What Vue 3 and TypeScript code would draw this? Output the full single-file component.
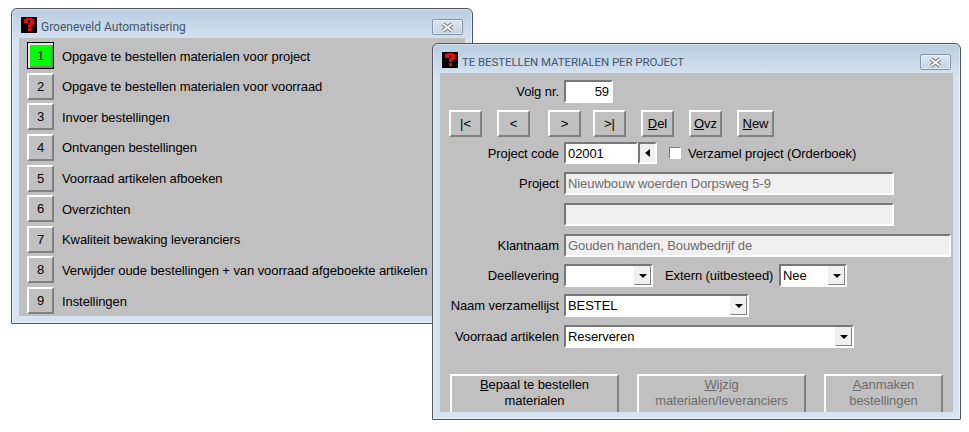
<script setup lang="ts">
const menuItems = [
  'Opgave te bestellen materialen voor project',
  'Opgave te bestellen materialen voor voorraad',
  'Invoer bestellingen',
  'Ontvangen bestellingen',
  'Voorraad artikelen afboeken',
  'Overzichten',
  'Kwaliteit bewaking leveranciers',
  'Verwijder oude bestellingen + van voorraad afgeboekte artikelen',
  'Instellingen',
];

const navButtons = [
  { key: '', post: '|<', width: 33 },
  { key: '', post: '<', width: 33 },
  { key: '', post: '>', width: 33 },
  { key: '', post: '>|', width: 33 },
  { key: 'D', post: 'el', width: 33 },
  { key: 'O', post: 'vz', width: 33 },
  { key: 'N', post: 'ew', width: 37 },
];
</script>

<template>
  <div class="desktop">
    <section class="window window-menu">
      <header class="titlebar">
        <svg class="app-icon" width="16" height="16" viewBox="0 0 16 16" shape-rendering="crispEdges">
          <rect width="16" height="16" fill="#000" />
          <path fill="#f00" d="M5 1h6v1h2v5h-1v1h-2v2H7V7h1V6h1V3H7v3H3V2h2zM7 11h3v3H7z" />
        </svg>
        <span class="title">Groeneveld Automatisering</span>
        <button class="close"><svg width="15" height="11" viewBox="0 0 15 11"><path d="M3 2l9 7M12 2l-9 7" stroke="#66727e" stroke-width="3.8" fill="none" /><path d="M3 2l9 7M12 2l-9 7" stroke="#fff" stroke-width="2" fill="none" /></svg></button>
      </header>
      <div class="client menu-client">
        <div v-for="(item, i) in menuItems" :key="item" class="menu-row">
          <button class="btn num" :class="{ active: i === 0 }">{{ i + 1 }}</button>
          <span class="menu-label">{{ item }}</span>
        </div>
      </div>
    </section>

    <section class="window window-form">
      <header class="titlebar">
        <svg class="app-icon" width="16" height="16" viewBox="0 0 16 16" shape-rendering="crispEdges">
          <rect width="16" height="16" fill="#000" />
          <path fill="#f00" d="M5 1h6v1h2v5h-1v1h-2v2H7V7h1V6h1V3H7v3H3V2h2zM7 11h3v3H7z" />
        </svg>
        <span class="title">TE BESTELLEN MATERIALEN PER PROJECT</span>
        <button class="close"><svg width="15" height="11" viewBox="0 0 15 11"><path d="M3 2l9 7M12 2l-9 7" stroke="#66727e" stroke-width="3.8" fill="none" /><path d="M3 2l9 7M12 2l-9 7" stroke="#fff" stroke-width="2" fill="none" /></svg></button>
      </header>
      <div class="client form-client">
        <div class="row volg">
          <label class="lbl">Volg nr.</label>
          <div class="field num-field">59</div>
        </div>

        <div class="nav">
          <button v-for="b in navButtons" :key="b.key + b.post" class="btn nav-btn" :style="{ width: b.width + 'px' }">
            <u v-if="b.key">{{ b.key }}</u>{{ b.post }}
          </button>
        </div>

        <div class="row code">
          <label class="lbl">Project code</label>
          <div class="field code-field">02001</div>
          <div class="lookup"><span class="arrow-left"></span></div>
          <span class="check"></span>
          <span class="check-label">Verzamel project (Orderboek)</span>
        </div>

        <div class="row project">
          <label class="lbl">Project</label>
          <div class="field off w-project">Nieuwbouw woerden Dorpsweg 5-9</div>
        </div>
        <div class="row project2">
          <div class="field off w-project offset"></div>
        </div>
        <div class="row klant">
          <label class="lbl">Klantnaam</label>
          <div class="field off w-klant">Gouden handen, Bouwbedrijf de</div>
        </div>

        <div class="row deel">
          <label class="lbl">Deellevering</label>
          <div class="field combo w-deel"><span></span><i class="drop"></i></div>
          <label class="extern">Extern (uitbesteed)</label>
          <div class="field combo w-nee"><span>Nee</span><i class="drop"></i></div>
        </div>
        <div class="row naam">
          <label class="lbl">Naam verzamellijst</label>
          <div class="field combo w-naam"><span>BESTEL</span><i class="drop"></i></div>
        </div>
        <div class="row voorraad">
          <label class="lbl">Voorraad artikelen</label>
          <div class="field combo w-voorraad"><span>Reserveren</span><i class="drop"></i></div>
        </div>

        <div class="actions">
          <button class="btn action a1"><u>B</u>epaal te bestellen<br>materialen</button>
          <button class="btn action a2 disabled"><u>W</u>ijzig<br>materialen/leveranciers</button>
          <button class="btn action a3 disabled"><u>A</u>anmaken<br>bestellingen</button>
        </div>
      </div>
    </section>
  </div>
</template>

<style>
html,
body {
  margin: 0;
  background: #fff;
}
</style>

<style scoped>
.desktop {
  position: relative;
  width: 969px;
  height: 432px;
  overflow: hidden;
  font-family: "Liberation Sans", Arial, sans-serif;
  font-size: 13px;
  letter-spacing: -0.08px;
  color: #000;
}
.window {
  position: absolute;
  box-sizing: border-box;
  display: flex;
  flex-direction: column;
  border: 1px solid #50555a;
  border-radius: 6px 6px 1px 1px;
  padding: 0 7px 7px;
  background: linear-gradient(180deg, #b9cde0 0, #d6e4f2 34px);
  box-shadow: inset 0 0 0 1px rgba(255, 255, 255, 0.45);
}
.window-menu {
  left: 11px;
  top: 8px;
  width: 462px;
  height: 316px;
}
.window-form {
  left: 432px;
  top: 43px;
  width: 529px;
  height: 377px;
}
.titlebar {
  flex: none;
  display: flex;
  align-items: center;
  height: 29px;
  padding-left: 2px;
}
.app-icon {
  flex: none;
  margin-top: 2px;
}
.title {
  margin-left: 4px;
  margin-top: 6px;
  color: #44566a;
  font-family: Roboto, "Liberation Sans", sans-serif;
  font-size: 12px;
  letter-spacing: 0;
}
.window-form .title {
  font-size: 11.5px;
  letter-spacing: -0.09px;
}
.close {
  margin-left: auto;
  margin-right: 2px;
  margin-top: 7px;
  box-sizing: border-box;
  width: 31px;
  height: 16px;
  padding: 0;
  display: flex;
  align-items: center;
  justify-content: center;
  border: 1px solid #8494a5;
  border-radius: 2px;
  background: linear-gradient(180deg, #dbe6f0, #c3d3e3);
  box-shadow: inset 0 0 0 1px rgba(255, 255, 255, 0.4);
}
.client {
  flex: 1;
  min-height: 0;
  background: #c0c0c0;
  overflow: hidden;
}
.btn {
  box-sizing: border-box;
  padding: 0;
  font: inherit;
  letter-spacing: inherit;
  color: #000;
  background: #c0c0c0;
  border: 2px solid;
  border-color: #fff #808080 #808080 #fff;
}
.menu-client {
  padding: 4px 0 0 8px;
}
.menu-row {
  display: flex;
  align-items: center;
  height: 27px;
  margin-bottom: 3.65px;
}
.num {
  width: 27px;
  height: 27px;
}
.num.active {
  background: #00ff00;
  border: 1px solid #000;
  box-shadow: inset 2px 2px 0 #e6e6e6, inset -2px -2px 0 #808080;
}
.menu-label {
  margin-left: 8px;
  margin-top: 1px;
  white-space: nowrap;
}
.form-client {
  padding: 7px 0 0 9px;
}
.row {
  display: flex;
  align-items: center;
}
.lbl {
  width: 110px;
  flex: none;
  text-align: right;
  white-space: nowrap;
  margin-right: 5px;
}
.field {
  box-sizing: border-box;
  height: 23px;
  display: flex;
  align-items: center;
  padding-left: 2px;
  background: #fff;
  border: 2px solid;
  border-color: #777 #fff #fff #777;
  white-space: nowrap;
}
.num-field {
  width: 49px;
  justify-content: flex-end;
  padding: 0 2px 0 0;
}
.nav {
  display: flex;
  height: 27px;
  margin-top: 7px;
  margin-bottom: 5px;
  gap: 15px;
}
.nav-btn {
  height: 27px;
}
.nav-btn:nth-child(2) {
  margin-right: 3px;
}
.nav-btn:nth-child(3) {
  margin-right: -3px;
}
.code-field {
  width: 74px;
  height: 22px;
}
.lookup {
  box-sizing: border-box;
  flex: none;
  width: 19px;
  height: 22px;
  display: flex;
  align-items: center;
  justify-content: center;
  background: #f0f0f0;
  border: 2px solid;
  border-color: #777 #fff #fff #777;
}
.arrow-left {
  width: 0;
  height: 0;
  border-style: solid;
  border-width: 4px 5px 4px 0;
  border-color: transparent #000 transparent transparent;
}
.check {
  box-sizing: border-box;
  flex: none;
  width: 12px;
  height: 12px;
  margin-left: 12px;
  background: #fff;
  border: 1px solid;
  border-color: #808080 #fff #fff #808080;
}
.check-label {
  margin-left: 7px;
  white-space: nowrap;
}
.code {
  height: 22px;
}
.project {
  margin-top: 8px;
}
.project2 {
  margin-top: 8px;
}
.klant {
  margin-top: 8px;
}
.deel {
  margin-top: 7px;
}
.naam {
  margin-top: 7px;
}
.voorraad {
  margin-top: 8px;
}
.off {
  background: #f0f0f0;
  color: #6d6d6d;
}
.offset {
  margin-left: 115px;
}
.w-project {
  width: 330px;
}
.w-klant {
  width: 387px;
}
.combo {
  padding-right: 0;
  justify-content: space-between;
}
.w-deel {
  width: 89px;
}
.w-nee {
  width: 68px;
}
.w-naam {
  width: 185px;
}
.w-voorraad {
  width: 290px;
}
.drop {
  box-sizing: border-box;
  flex: none;
  width: 17px;
  height: 19px;
  display: flex;
  align-items: center;
  justify-content: center;
  background: #f0f0f0;
  border: 1px solid;
  border-color: #f0f0f0 #808080 #808080 #f0f0f0;
}
.drop::after {
  content: "";
  border-style: solid;
  border-width: 4px 4px 0;
  border-color: #000 transparent transparent;
}
.extern {
  flex: none;
  width: 112px;
  margin-left: 12px;
  margin-right: 2px;
  white-space: nowrap;
}
.actions {
  display: flex;
  margin: 26px 0 0 1px;
  gap: 18px;
}
.action {
  flex: none;
  height: 50px;
  padding-bottom: 12px;
  line-height: 16px;
}
.a1,
.a2 {
  width: 169px;
}
.a3 {
  width: 119px;
}
.disabled {
  color: #6d6d6d;
}
</style>
